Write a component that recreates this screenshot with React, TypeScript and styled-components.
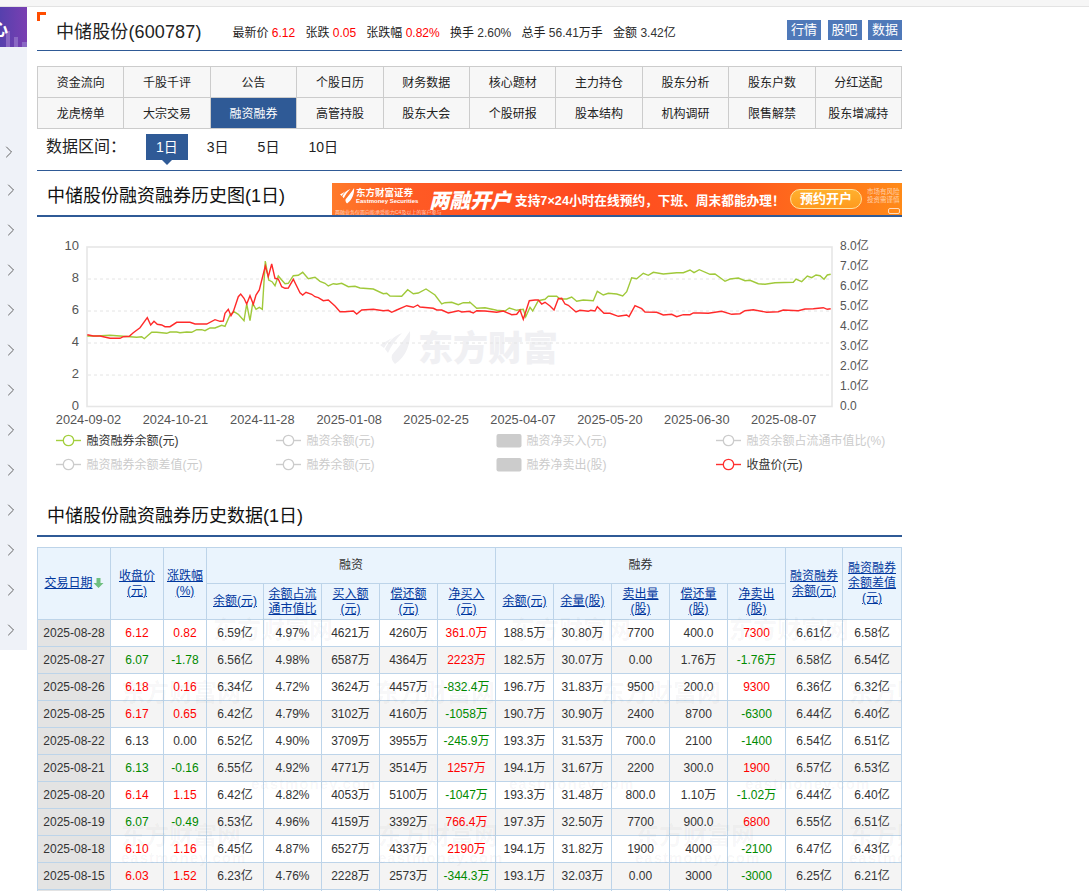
import React from "react";
import styled, { createGlobalStyle } from "styled-components";
import { ChevronRight } from "lucide-react";

const GlobalStyle = createGlobalStyle`
  html, body {
    margin: 0;
    height: 891px;
    overflow: hidden;
    background: #fff;
    font-family: "Liberation Sans", "Noto Sans CJK SC", sans-serif;
    font-size: 12px;
    color: #333;
  }
`;

const navItems = [
  "资金流向", "千股千评", "公告", "个股日历", "财务数据", "核心题材", "主力持仓", "股东分析", "股东户数", "分红送配",
  "龙虎榜单", "大宗交易", "融资融券", "高管持股", "股东大会", "个股研报", "股本结构", "机构调研", "限售解禁", "股东增减持",
];

const stats = [
  { label: "最新价", value: "6.12", up: true },
  { label: "张跌", value: "0.05", up: true },
  { label: "张跌幅", value: "0.82%", up: true },
  { label: "换手", value: "2.60%" },
  { label: "总手", value: "56.41", unit: "万手" },
  { label: "金额", value: "3.42", unit: "亿" },
];

const rows = [
  ["2025-08-28", "6.12", "0.82", "6.59亿", "4.97%", "4621万", "4260万", "361.0万", "188.5万", "30.80万", "7700", "400.0", "7300", "6.61亿", "6.58亿"],
  ["2025-08-27", "6.07", "-1.78", "6.56亿", "4.98%", "6587万", "4364万", "2223万", "182.5万", "30.07万", "0.00", "1.76万", "-1.76万", "6.58亿", "6.54亿"],
  ["2025-08-26", "6.18", "0.16", "6.34亿", "4.72%", "3624万", "4457万", "-832.4万", "196.7万", "31.83万", "9500", "200.0", "9300", "6.36亿", "6.32亿"],
  ["2025-08-25", "6.17", "0.65", "6.42亿", "4.79%", "3102万", "4160万", "-1058万", "190.7万", "30.90万", "2400", "8700", "-6300", "6.44亿", "6.40亿"],
  ["2025-08-22", "6.13", "0.00", "6.52亿", "4.90%", "3709万", "3955万", "-245.9万", "193.3万", "31.53万", "700.0", "2100", "-1400", "6.54亿", "6.51亿"],
  ["2025-08-21", "6.13", "-0.16", "6.55亿", "4.92%", "4771万", "3514万", "1257万", "194.1万", "31.67万", "2200", "300.0", "1900", "6.57亿", "6.53亿"],
  ["2025-08-20", "6.14", "1.15", "6.42亿", "4.82%", "4053万", "5100万", "-1047万", "193.3万", "31.48万", "800.0", "1.10万", "-1.02万", "6.44亿", "6.40亿"],
  ["2025-08-19", "6.07", "-0.49", "6.53亿", "4.96%", "4159万", "3392万", "766.4万", "197.3万", "32.50万", "7700", "900.0", "6800", "6.55亿", "6.51亿"],
  ["2025-08-18", "6.10", "1.16", "6.45亿", "4.87%", "6527万", "4337万", "2190万", "194.1万", "31.82万", "1900", "4000", "-2100", "6.47亿", "6.43亿"],
  ["2025-08-15", "6.03", "1.52", "6.23亿", "4.76%", "2228万", "2573万", "-344.3万", "193.1万", "32.03万", "0.00", "3000", "-3000", "6.25亿", "6.21亿"],
];

const colWidths = [73, 53, 43, 57, 58, 58, 58, 58, 58, 58, 58, 58, 58, 57, 59];

// points read off the reference, in 3x crop coordinates
const leftCrop = (pts: number[][]) => pts.map(([x, y]) => [30 + x / 3, 230 + y / 3]);
const rightCrop = (pts: number[][]) => pts.map(([x, y]) => [470 + x / 3, 230 + y / 3]);

const greenLine = [
  ...leftCrop([[172,318],[200,318],[240,316],[270,318],[300,320],[320,322],[335,320],[343,326],[352,318],[365,307],[380,307],[410,310],[420,306],[440,306],[450,308],[470,306],[485,307],[500,299],[515,299],[525,302],[540,294],[555,294],[575,286],[585,289],[600,255],[612,245],[625,253],[642,272],[650,222],[660,272],[668,220],[678,238],[688,232],[697,238],[706,93],[716,150],[726,155],[735,167],[745,138],[755,150],[765,161],[775,160],[790,137],[805,136],[818,127],[835,146],[855,142],[870,154],[885,160],[895,168],[910,161],[920,163],[935,160],[955,170],[975,169],[990,174],[1030,177],[1060,191],[1070,190],[1080,198],[1115,199],[1133,179],[1150,191],[1165,189],[1188,177],[1215,195],[1235,222],[1245,218],[1265,217],[1285,224],[1300,218],[1320,218]]),
  ...rightCrop([[0,217],[20,235],[45,233],[80,241],[105,243],[118,234],[140,241],[160,238],[167,260],[180,232],[188,243],[205,212],[225,208],[235,199],[260,199],[270,207],[290,207],[305,201],[320,214],[340,210],[370,212],[382,184],[400,195],[415,190],[440,192],[458,198],[470,185],[485,143],[500,146],[520,130],[535,136],[550,127],[580,132],[620,128],[640,128],[660,120],[672,128],[688,119],[720,133],[735,132],[765,154],[780,147],[805,144],[825,152],[840,151],[865,161],[885,163],[915,158],[970,157],[978,147],[995,155],[1012,138],[1025,143],[1038,135],[1050,137],[1062,148],[1072,135],[1082,133]]),
];

const redLine = [
  ...leftCrop([[172,314],[190,318],[210,318],[240,325],[270,325],[280,320],[298,319],[310,308],[330,293],[352,263],[362,285],[372,274],[382,283],[395,285],[405,290],[420,290],[440,277],[480,277],[495,282],[530,282],[555,269],[570,274],[580,273],[585,250],[595,238],[603,257],[610,245],[625,200],[632,192],[642,205],[650,222],[660,197],[670,223],[678,195],[688,180],[706,108],[715,140],[725,102],[735,145],[745,147],[755,170],[765,175],[775,174],[790,148],[810,188],[818,195],[828,187],[845,193],[855,200],[865,203],[880,212],[895,210],[915,228],[930,245],[945,245],[970,243],[980,252],[995,240],[1030,238],[1060,242],[1075,241],[1085,247],[1100,240],[1130,227],[1150,232],[1163,225],[1170,231],[1210,235],[1220,240],[1235,240],[1255,249],[1285,242],[1295,246],[1320,244]]),
  ...rightCrop([[0,245],[10,249],[20,242],[45,243],[80,247],[100,243],[125,254],[140,253],[150,240],[160,268],[178,212],[195,210],[205,210],[215,222],[225,217],[240,228],[252,240],[265,206],[275,205],[285,222],[295,226],[318,246],[330,241],[355,244],[362,241],[375,243],[382,230],[402,250],[420,250],[445,259],[470,255],[477,260],[495,227],[515,236],[525,246],[560,247],[580,255],[605,253],[620,260],[640,254],[660,254],[670,249],[690,249],[715,250],[755,244],[785,253],[810,251],[825,242],[850,239],[890,247],[925,245],[940,240],[985,242],[1005,237],[1030,236],[1060,233],[1072,238],[1082,236]]),
];

const toPoints = (pts: number[][]) => pts.map(([x, y]) => `${x.toFixed(1)},${y.toFixed(1)}`).join(" ");

const legend = [
  { x: 57, y: 440, label: "融资融券余额(元)", color: "#a3cf3e", active: true },
  { x: 277, y: 440, label: "融资余额(元)" },
  { x: 497, y: 440, label: "融资净买入(元)", bar: true },
  { x: 717, y: 440, label: "融资余额占流通市值比(%)" },
  { x: 57, y: 464, label: "融资融券余额差值(元)" },
  { x: 277, y: 464, label: "融券余额(元)" },
  { x: 497, y: 464, label: "融券净卖出(股)", bar: true },
  { x: 717, y: 464, label: "收盘价(元)", color: "#ff3030", active: true },
];

const watermarks = [
  { top: 70, left: 168, name: true },
  { top: 70, left: 466, name: true },
  { top: 70, left: 684, name: true },
  { top: 133, left: 76, name: true },
  { top: 133, left: 330, name: true },
  { top: 133, left: 556, name: true },
  { top: 133, left: 804, name: true },
  { top: 228, left: 206 },
  { top: 228, left: 464 },
  { top: 228, left: 700 },
  { top: 276, left: 76, name: true, both: true },
  { top: 276, left: 333, name: true, both: true },
  { top: 276, left: 590, name: true, both: true },
  { top: 276, left: 804, name: true, both: true },
];

const toneOf = (text: string): "up" | "down" | undefined => {
  const n = parseFloat(text);
  if (n > 0) return "up";
  if (n < 0) return "down";
  return undefined;
};

const cellTone = (row: string[], col: number) => {
  if (col === 1 || col === 2) return toneOf(row[2]);
  if (col === 7 || col === 12) return toneOf(row[col]);
  return undefined;
};

const Page = styled.div`
  width: 1089px;
`;

const TopStrip = styled.div`
  height: 6px;
  background: #f6f6f6;
  border-bottom: 1px solid #e3e3e3;
`;

const Columns = styled.div`
  display: flex;
  gap: 10px;
  align-items: flex-start;
`;

const Sidebar = styled.aside`
  width: 27px;
  flex: none;
  background: #eff2f8;
`;

const SideHead = styled.svg`
  display: block;
  width: 27px;
  height: 40px;
`;

const SideList = styled.div`
  padding-top: 83px;
`;

const SideItem = styled.div`
  height: 40px;
  display: flex;
  align-items: center;
  padding-left: 1px;
  color: #555;

  &:first-child svg {
    transform: translate(-2px, 2px);
  }
`;

const Main = styled.main`
  width: 865px;
  flex: none;
`;

const Header = styled.header`
  position: relative;
  height: 40px;
  padding: 3px 0 0 19px;
  display: flex;
  align-items: center;
  border-bottom: 1px solid #2f5a96;
`;

const Corner = styled.i`
  position: absolute;
  left: 0;
  top: 5px;
  width: 6px;
  height: 6px;
  border-top: 3px solid #ff4d00;
  border-left: 3px solid #ff4d00;
`;

const StockName = styled.h1`
  margin: 0 31px 0 0;
  font-size: 18px;
  letter-spacing: 0.12px;
  font-weight: normal;
  color: #222;
  white-space: nowrap;
`;

const Stats = styled.div`
  display: flex;
  gap: 10.2px;
  padding-top: 3px;
  color: #222;
  white-space: nowrap;
`;

const StatValue = styled.span<{ $up?: boolean }>`
  color: ${(p) => (p.$up ? "#ff0000" : "#333")};
`;

const QuickLinks = styled.div`
  margin-left: auto;
  display: flex;
  gap: 6.5px;
`;

const QuickLink = styled.a`
  width: 34px;
  height: 20px;
  line-height: 20px;
  text-align: center;
  font-size: 13px;
  color: #fff;
  background: #4f79b9;
`;

const NavGrid = styled.nav`
  margin-top: 15px;
  display: grid;
  grid-template-columns: repeat(10, 1fr);
  border-top: 1px solid #ccc;
  border-right: 1px solid #ccc;
`;

const NavCell = styled.a<{ $active?: boolean }>`
  height: 30px;
  line-height: 32px;
  text-align: center;
  border-left: 1px solid #ccc;
  border-bottom: 1px solid #ccc;
  background: ${(p) => (p.$active ? "#2f5a96" : "#f7f7f7")};
  color: ${(p) => (p.$active ? "#fff" : "#222")};
`;

const RangeBar = styled.div`
  height: 42px;
  padding: 5px 0 0 9px;
  box-sizing: border-box;
  display: flex;
  border-bottom: 1px solid #2f5a96;
`;

const RangeLabel = styled.span`
  width: 100px;
  line-height: 26px;
  font-size: 16px;
  color: #222;
`;

const RangeTabs = styled.div`
  display: flex;
  gap: 9px;
`;

const RangeTab = styled.a<{ $active?: boolean }>`
  position: relative;
  height: 26px;
  line-height: 26px;
  padding: 0 10px;
  font-size: 14px;
  color: ${(p) => (p.$active ? "#fff" : "#222")};
  background: ${(p) => (p.$active ? "#2f5a96" : "transparent")};

  ${(p) =>
    p.$active &&
    `&::after {
      content: "";
      position: absolute;
      left: 50%;
      top: 26px;
      margin-left: -5px;
      border: 5px solid transparent;
      border-bottom: 0;
      border-top-color: #2f5a96;
    }`}
`;

const SectionHead = styled.div<{ $tall?: boolean }>`
  height: ${(p) => (p.$tall ? "44px" : "38px")};
  display: flex;
  align-items: flex-end;
  justify-content: space-between;
  border-bottom: 2px solid #2f5a96;
`;

const SectionTitle = styled.h2`
  margin: 0;
  padding-left: 10px;
  line-height: 38px;
  font-size: 18px;
  font-weight: normal;
  color: #111;
`;

const AdBanner = styled.a`
  position: relative;
  width: 570px;
  height: 32px;
  box-sizing: border-box;
  padding: 0 0 0 8px;
  display: flex;
  align-items: center;
  color: #fff;
  overflow: hidden;
  background: linear-gradient(90deg, #ff7a2a 0%, #ff5a24 14%, #ff4a20 45%, #ff5a1e 72%, #ff8a18 100%);
`;

const AdBrand = styled.div`
  width: 89px;
  flex: none;
  display: flex;
  gap: 1px;
  margin-top: -6px;
`;

const AdBrandText = styled.div`
  line-height: 10px;
  font-size: 9.5px;
  font-weight: bold;
  white-space: nowrap;

  small {
    display: block;
    font-size: 6px;
    line-height: 7px;
  }
`;

const AdNote = styled.span`
  position: absolute;
  left: 3px;
  bottom: 0;
  font-size: 5px;
  line-height: 6px;
  opacity: 0.65;
`;

const AdHeadline = styled.strong`
  width: 86px;
  flex: none;
  font-size: 20.5px;
  font-style: italic;
  font-weight: 900;
  white-space: nowrap;
`;

const AdText = styled.span`
  width: 275px;
  flex: none;
  font-size: 12.7px;
  font-weight: bold;
  white-space: nowrap;
`;

const AdButton = styled.span`
  width: 72px;
  height: 20px;
  flex: none;
  box-sizing: border-box;
  line-height: 17px;
  text-align: center;
  font-size: 13px;
  font-weight: bold;
  border: 1.5px solid #ffe3a0;
  border-radius: 10px;
  background: linear-gradient(180deg, #ffb02e, #ff9a1e);
`;

const AdRisk = styled.span`
  margin: -7px 0 0 5px;
  font-size: 6.5px;
  line-height: 8px;
  opacity: 0.6;
  white-space: nowrap;
`;

const AdTag = styled.span`
  position: absolute;
  right: 2px;
  bottom: 1px;
  width: 12px;
  height: 6px;
  box-sizing: border-box;
  border: 1px solid rgba(255, 255, 255, 0.7);
  border-radius: 2px;
`;

const ChartSvg = styled.svg`
  display: block;
  width: 865px;
  height: 280px;
  font-family: "Liberation Sans", "Noto Sans CJK SC", sans-serif;
`;

const TableWrap = styled.div`
  position: relative;
  margin-top: 10px;
  overflow: hidden;
`;

const DataTable = styled.table`
  width: 865px;
  table-layout: fixed;
  border-collapse: collapse;
  text-align: center;

  th, td {
    padding: 0;
    border: 1px solid #bdd4e9;
    overflow: hidden;
    white-space: nowrap;
  }

  th {
    height: 35px;
    line-height: 15px;
    font-weight: normal;
    background: #eaf4fd;
  }

  td {
    height: 26px;
    line-height: 26px;
  }
`;

const HeadLink = styled.a`
  color: #00379e;
  text-decoration: underline;
`;

const SortArrow = styled.svg`
  width: 11px;
  height: 10px;
  vertical-align: -1px;
`;

const DataRow = styled.tr<{ $shade: boolean }>`
  background: ${(p) => (p.$shade ? "#f4f4f4" : "#fff")};
`;

const DateCell = styled.td`
  background: #e3e3e3;
`;

const ValueCell = styled.td<{ $tone?: "up" | "down" }>`
  color: ${(p) => (p.$tone === "up" ? "#ff0000" : p.$tone === "down" ? "#008a00" : "#333")};
`;

// the site's tiled background mark, faint and behind the reading order
const Watermark = styled.div<{ $top: number; $left: number }>`
  position: absolute;
  top: ${(p) => p.$top}px;
  left: ${(p) => p.$left}px;
  display: flex;
  flex-direction: column;
  pointer-events: none;
  color: rgba(60, 60, 70, 0.045);
  font-weight: bold;
  white-space: nowrap;
`;

const WatermarkName = styled.span`
  font-size: 24px;
  line-height: 26px;
  padding-left: 8px;

  &::before {
    content: "东方财富网";
  }
`;

const WatermarkUrl = styled.span`
  font-size: 15px;
  line-height: 18px;
  letter-spacing: 1px;
  padding-left: 8px;

  &::before {
    content: "eastmoney.com";
  }
`;

const Leaf = ({ x = 0, y = 0, fill }: { x?: number; y?: number; fill: string }) => (
  <g transform={`translate(${x} ${y})`} fill={fill}>
    <path d="M30 0C31 12 26 26 15 33C12 30 11 27 12 24C17 18 24 9 30 0Z" />
    <path d="M22 2C16 8 11 15 8 22L5 18C8 11 14 5 22 2Z" />
    <path d="M12 7C8 9 4 12 0 14L4 17C6 13 9 10 12 7Z" />
  </g>
);

const Chart = () => (
  <ChartSvg viewBox="37 217 865 280">
    <Leaf x={380} y={331} fill="#f0f0f3" />
    <text x={418} y={361} fontSize={35} fontWeight={900} fill="#f0f0f3">东方财富</text>
    <rect x={87} y={247} width={745} height={159.5} fill="none" stroke="#e6e6e6" strokeWidth={1.6} />
    {[279, 311, 343, 375].map((y) => (
      <line key={y} x1={88} x2={831} y1={y} y2={y} stroke="#e4e4e4" strokeDasharray="3 3" />
    ))}
    {["10", "8", "6", "4", "2", "0"].map((t, i) => (
      <text key={t} x={79} y={250 + i * 32} textAnchor="end" fontSize={13} fill="#555">{t}</text>
    ))}
    {["8.0亿", "7.0亿", "6.0亿", "5.0亿", "4.0亿", "3.0亿", "2.0亿", "1.0亿", "0.0"].map((t, i) => (
      <text key={t} x={840} y={250 + i * 20} fontSize={12} fill="#555">{t}</text>
    ))}
    {["2024-09-02", "2024-10-21", "2024-11-28", "2025-01-08", "2025-02-25", "2025-04-07", "2025-05-20", "2025-06-30", "2025-08-07"].map((t, i) => (
      <text key={t} x={88.5 + i * 86.9} y={424} textAnchor="middle" fontSize={12.8} fill="#555">{t}</text>
    ))}
    <polyline points={toPoints(greenLine)} fill="none" stroke="#a0c93a" strokeWidth={1.4} />
    <polyline points={toPoints(redLine)} fill="none" stroke="#ff2a2a" strokeWidth={1.4} />
    {legend.map((item) => {
      const color = item.color ?? "#ccc";
      return (
        <g key={item.label}>
          {item.bar ? (
            <rect x={item.x - 0.5} y={item.y - 6} width={25} height={13.5} rx={2} fill="#ccc" />
          ) : (
            <>
              <line x1={item.x - 1} x2={item.x + 24} y1={item.y + 0.5} y2={item.y + 0.5} stroke={color} strokeWidth={1.4} />
              <circle cx={item.x + 11.5} cy={item.y + 0.5} r={5.2} fill="#fff" stroke={color} strokeWidth={1.3} />
            </>
          )}
          <text x={item.x + 29.5} y={item.y + 4.5} fontSize={12} fill={item.active ? "#333" : "#ccc"}>{item.label}</text>
        </g>
      );
    })}
  </ChartSvg>
);

const Ad = () => (
  <AdBanner>
    <AdBrand>
      <svg width="15" height="16" viewBox="0 0 32 34">
        <Leaf fill="#fff" />
      </svg>
      <AdBrandText>
        东方财富证券
        <small>Eastmoney Securities</small>
      </AdBrandText>
    </AdBrand>
    <AdNote>两融业务仅面向能承受能力C4及以上的客户参与</AdNote>
    <AdHeadline>两融开户</AdHeadline>
    <AdText>支持7×24小时在线预约，下班、周末都能办理！</AdText>
    <AdButton>预约开户</AdButton>
    <AdRisk>
      市场有风险
      <br />
      投资需谨慎
    </AdRisk>
    <AdTag />
  </AdBanner>
);

const App = () => {
  return (
    <Page>
      <GlobalStyle />
      <TopStrip />
      <Columns>
        <Sidebar>
          <SideHead viewBox="0 0 27 40">
            <defs>
              <linearGradient id="sideHead" x1="0" x2="1" y1="0" y2="0">
                <stop offset="0" stopColor="#5640ad" />
                <stop offset="1" stopColor="#7a3fb2" />
              </linearGradient>
            </defs>
            <rect width="27" height="40" fill="url(#sideHead)" />
            <rect x="6" y="24" width="4" height="16" fill="#8a68c4" />
            <rect x="14" y="30" width="4" height="10" fill="#8a68c4" />
            <rect x="22" y="35" width="5" height="5" fill="#8a68c4" />
            <text x="-10" y="29" fontSize="18" fontWeight="700" fill="#fff">心</text>
          </SideHead>
          <SideList>
            {Array.from({ length: 13 }, (_, i) => (
              <SideItem key={i}>
                <ChevronRight size={20} strokeWidth={1.1} />
              </SideItem>
            ))}
          </SideList>
        </Sidebar>
        <Main>
          <Header>
            <Corner />
            <StockName>中储股份(600787)</StockName>
            <Stats>
              {stats.map((s) => (
                <span key={s.label}>
                  {s.label} <StatValue $up={s.up}>{s.value}</StatValue>
                  {s.unit}
                </span>
              ))}
            </Stats>
            <QuickLinks>
              <QuickLink>行情</QuickLink>
              <QuickLink>股吧</QuickLink>
              <QuickLink>数据</QuickLink>
            </QuickLinks>
          </Header>
          <NavGrid>
            {navItems.map((item) => (
              <NavCell key={item} $active={item === "融资融券"}>{item}</NavCell>
            ))}
          </NavGrid>
          <RangeBar>
            <RangeLabel>数据区间：</RangeLabel>
            <RangeTabs>
              <RangeTab $active>1日</RangeTab>
              <RangeTab>3日</RangeTab>
              <RangeTab>5日</RangeTab>
              <RangeTab>10日</RangeTab>
            </RangeTabs>
          </RangeBar>
          <SectionHead $tall>
            <SectionTitle>中储股份融资融券历史图(1日)</SectionTitle>
            <Ad />
          </SectionHead>
          <Chart />
          <SectionHead>
            <SectionTitle>中储股份融资融券历史数据(1日)</SectionTitle>
          </SectionHead>
          <TableWrap>
            <DataTable>
              <colgroup>
                {colWidths.map((w, i) => (
                  <col key={i} width={w} />
                ))}
              </colgroup>
              <thead>
                <tr>
                  <th rowSpan={2}>
                    <HeadLink>交易日期</HeadLink>
                    <SortArrow viewBox="0 0 10 10">
                      <path d="M3 0H7V5H10L5 10L0 5H3Z" fill="#6fbf7f" />
                    </SortArrow>
                  </th>
                  <th rowSpan={2}><HeadLink>收盘价<br />(元)</HeadLink></th>
                  <th rowSpan={2}><HeadLink>涨跌幅<br />(%)</HeadLink></th>
                  <th colSpan={5}>融资</th>
                  <th colSpan={5}>融券</th>
                  <th rowSpan={2}><HeadLink>融资融券<br />余额(元)</HeadLink></th>
                  <th rowSpan={2}><HeadLink>融资融券<br />余额差值<br />(元)</HeadLink></th>
                </tr>
                <tr>
                  <th><HeadLink>余额(元)</HeadLink></th>
                  <th><HeadLink>余额占流<br />通市值比</HeadLink></th>
                  <th><HeadLink>买入额<br />(元)</HeadLink></th>
                  <th><HeadLink>偿还额<br />(元)</HeadLink></th>
                  <th><HeadLink>净买入<br />(元)</HeadLink></th>
                  <th><HeadLink>余额(元)</HeadLink></th>
                  <th><HeadLink>余量(股)</HeadLink></th>
                  <th><HeadLink>卖出量<br />(股)</HeadLink></th>
                  <th><HeadLink>偿还量<br />(股)</HeadLink></th>
                  <th><HeadLink>净卖出<br />(股)</HeadLink></th>
                </tr>
              </thead>
              <tbody>
                {rows.map((row, r) => (
                  <DataRow key={row[0]} $shade={r % 2 === 1}>
                    <DateCell>{row[0]}</DateCell>
                    {row.slice(1).map((cell, c) => (
                      <ValueCell key={c} $tone={cellTone(row, c + 1)}>{cell}</ValueCell>
                    ))}
                  </DataRow>
                ))}
                <DataRow $shade={false}>
                  <DateCell />
                  {colWidths.slice(1).map((_, c) => (
                    <ValueCell key={c} />
                  ))}
                </DataRow>
              </tbody>
            </DataTable>
            {watermarks.map((w, i) => (
              <Watermark key={i} $top={w.top} $left={w.left} aria-hidden="true">
                {w.name && <WatermarkName />}
                {(!w.name || w.both) && <WatermarkUrl />}
              </Watermark>
            ))}
          </TableWrap>
        </Main>
      </Columns>
    </Page>
  );
};

export default App;
